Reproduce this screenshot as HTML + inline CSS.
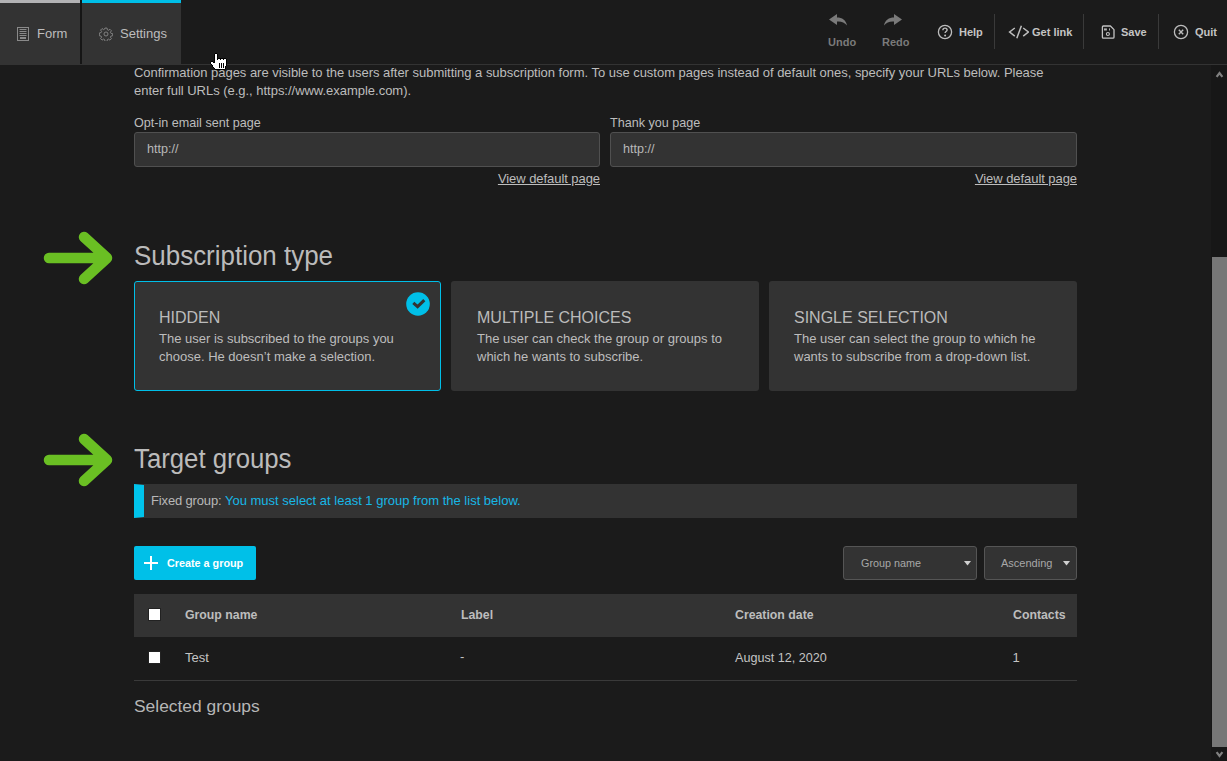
<!DOCTYPE html>
<html><head><meta charset="utf-8">
<style>
*{box-sizing:border-box;margin:0;padding:0}
html,body{width:1227px;height:761px;overflow:hidden;background:#1b1b1b;font-family:"Liberation Sans",sans-serif;color:#bdbdbd}
.a{position:absolute;white-space:nowrap}
.t{position:absolute;white-space:nowrap;line-height:1}
#hdr{position:absolute;left:0;top:0;width:1227px;height:65px;background:#1b1b1b;border-bottom:1px solid #333}
.tab{position:absolute;top:0;height:64px;background:#333}
.hb{position:absolute;font-size:11px;font-weight:bold;color:#c4c4c4;line-height:1}
.sep{position:absolute;top:14px;width:1px;height:35px;background:#3a3a3a}
.inp{position:absolute;top:132px;height:35px;background:#333;border:1px solid #505050;border-radius:3px}
.card{position:absolute;top:281px;height:110px;background:#333;border-radius:3px}
.ct{position:absolute;font-size:16px;color:#bbbbbb;line-height:1}
.cd{position:absolute;font-size:13px;color:#bdbdbd;line-height:18px;white-space:nowrap}
.th{position:absolute;font-size:12.3px;font-weight:bold;color:#bdbdbd;line-height:1}
.td{position:absolute;font-size:13px;color:#c4c4c4;line-height:1}
.cb{position:absolute;width:12px;height:12px;background:#fff;border:1px solid #222}
</style></head><body>

<div id="hdr"></div>
<div class="tab" style="left:0;width:80px"></div>
<div class="a" style="left:0;top:0;width:80px;height:3px;background:#b3b3b5"></div>
<div class="a" style="left:80px;top:0;width:2px;height:64px;background:#151515"></div>
<div class="tab" style="left:82px;width:99px"></div>
<div class="a" style="left:82px;top:0;width:99px;height:3px;background:#00bfe8"></div>

<!-- form icon -->
<svg class="a" style="left:17px;top:27px" width="12" height="14" viewBox="0 0 12 14">
<rect x="0.5" y="0.5" width="11" height="13" fill="none" stroke="#8a8a8a" stroke-width="1"/>
<path d="M2.5 2.5H9.5M2.5 4.5H9.5M2.5 6.5H9.5M2.5 8.5H9.5" stroke="#8a8a8a" stroke-width="1"/>
<rect x="3" y="10" width="6" height="2" fill="#8a8a8a"/>
</svg>
<div class="t" style="left:37px;top:27px;font-size:13px;color:#bdbdbd">Form</div>

<!-- gear icon -->
<svg class="a" style="left:99px;top:27px" width="14" height="14" viewBox="0 0 16 16">
<path d="M6.8 1.2h2.4l.4 2 1.2.6 1.7-1.2 1.7 1.7-1.2 1.7.6 1.2 2 .4v2.4l-2 .4-.6 1.2 1.2 1.7-1.7 1.7-1.7-1.2-1.2.6-.4 2H6.8l-.4-2-1.2-.6-1.7 1.2-1.7-1.7 1.2-1.7-.6-1.2-2-.4V6.8l2-.4.6-1.2-1.2-1.7 1.7-1.7 1.7 1.2 1.2-.6z" fill="none" stroke="#8a8a8a" stroke-width="1"/>
<circle cx="8" cy="8" r="2.3" fill="none" stroke="#8a8a8a" stroke-width="1"/>
</svg>
<div class="t" style="left:120px;top:27px;font-size:13px;color:#bdbdbd">Settings</div>

<!-- cursor -->
<svg class="a" style="left:210px;top:53px" width="17" height="17" viewBox="0 0 17 17" shape-rendering="crispEdges"><path d="M5 0h1v1h-1zM6 0h1v1h-1zM4 1h1v1h-1zM7 1h1v1h-1zM4 2h1v1h-1zM7 2h1v1h-1zM4 3h1v1h-1zM7 3h1v1h-1zM4 4h1v1h-1zM7 4h1v1h-1zM4 5h1v1h-1zM7 5h1v1h-1zM8 5h1v1h-1zM9 5h1v1h-1zM10 5h1v1h-1zM11 5h1v1h-1zM12 5h1v1h-1zM13 5h1v1h-1zM14 5h1v1h-1zM15 5h1v1h-1zM4 6h1v1h-1zM7 6h1v1h-1zM10 6h1v1h-1zM13 6h1v1h-1zM16 6h1v1h-1zM4 7h1v1h-1zM16 7h1v1h-1zM1 8h1v1h-1zM2 8h1v1h-1zM4 8h1v1h-1zM16 8h1v1h-1zM0 9h1v1h-1zM3 9h1v1h-1zM4 9h1v1h-1zM16 9h1v1h-1zM0 10h1v1h-1zM9 10h1v1h-1zM11 10h1v1h-1zM13 10h1v1h-1zM16 10h1v1h-1zM1 11h1v1h-1zM9 11h1v1h-1zM11 11h1v1h-1zM13 11h1v1h-1zM16 11h1v1h-1zM2 12h1v1h-1zM9 12h1v1h-1zM11 12h1v1h-1zM13 12h1v1h-1zM16 12h1v1h-1zM2 13h1v1h-1zM9 13h1v1h-1zM11 13h1v1h-1zM13 13h1v1h-1zM15 13h1v1h-1zM3 14h1v1h-1zM9 14h1v1h-1zM11 14h1v1h-1zM13 14h1v1h-1zM15 14h1v1h-1zM4 15h1v1h-1zM15 15h1v1h-1zM5 16h1v1h-1zM6 16h1v1h-1zM7 16h1v1h-1zM8 16h1v1h-1zM9 16h1v1h-1zM10 16h1v1h-1zM11 16h1v1h-1zM12 16h1v1h-1zM13 16h1v1h-1zM14 16h1v1h-1z" fill="#000"/><path d="M5 1h1v1h-1zM6 1h1v1h-1zM5 2h1v1h-1zM6 2h1v1h-1zM5 3h1v1h-1zM6 3h1v1h-1zM5 4h1v1h-1zM6 4h1v1h-1zM5 5h1v1h-1zM6 5h1v1h-1zM5 6h1v1h-1zM6 6h1v1h-1zM8 6h1v1h-1zM9 6h1v1h-1zM11 6h1v1h-1zM12 6h1v1h-1zM14 6h1v1h-1zM15 6h1v1h-1zM5 7h1v1h-1zM6 7h1v1h-1zM7 7h1v1h-1zM8 7h1v1h-1zM9 7h1v1h-1zM10 7h1v1h-1zM11 7h1v1h-1zM12 7h1v1h-1zM13 7h1v1h-1zM14 7h1v1h-1zM15 7h1v1h-1zM5 8h1v1h-1zM6 8h1v1h-1zM7 8h1v1h-1zM8 8h1v1h-1zM9 8h1v1h-1zM10 8h1v1h-1zM11 8h1v1h-1zM12 8h1v1h-1zM13 8h1v1h-1zM14 8h1v1h-1zM15 8h1v1h-1zM1 9h1v1h-1zM2 9h1v1h-1zM5 9h1v1h-1zM6 9h1v1h-1zM7 9h1v1h-1zM8 9h1v1h-1zM9 9h1v1h-1zM10 9h1v1h-1zM11 9h1v1h-1zM12 9h1v1h-1zM13 9h1v1h-1zM14 9h1v1h-1zM15 9h1v1h-1zM1 10h1v1h-1zM2 10h1v1h-1zM3 10h1v1h-1zM4 10h1v1h-1zM5 10h1v1h-1zM6 10h1v1h-1zM7 10h1v1h-1zM8 10h1v1h-1zM10 10h1v1h-1zM12 10h1v1h-1zM14 10h1v1h-1zM15 10h1v1h-1zM2 11h1v1h-1zM3 11h1v1h-1zM4 11h1v1h-1zM5 11h1v1h-1zM6 11h1v1h-1zM7 11h1v1h-1zM8 11h1v1h-1zM10 11h1v1h-1zM12 11h1v1h-1zM14 11h1v1h-1zM15 11h1v1h-1zM3 12h1v1h-1zM4 12h1v1h-1zM5 12h1v1h-1zM6 12h1v1h-1zM7 12h1v1h-1zM8 12h1v1h-1zM10 12h1v1h-1zM12 12h1v1h-1zM14 12h1v1h-1zM15 12h1v1h-1zM3 13h1v1h-1zM4 13h1v1h-1zM5 13h1v1h-1zM6 13h1v1h-1zM7 13h1v1h-1zM8 13h1v1h-1zM10 13h1v1h-1zM12 13h1v1h-1zM14 13h1v1h-1zM4 14h1v1h-1zM5 14h1v1h-1zM6 14h1v1h-1zM7 14h1v1h-1zM8 14h1v1h-1zM10 14h1v1h-1zM12 14h1v1h-1zM14 14h1v1h-1zM5 15h1v1h-1zM6 15h1v1h-1zM7 15h1v1h-1zM8 15h1v1h-1zM9 15h1v1h-1zM10 15h1v1h-1zM11 15h1v1h-1zM12 15h1v1h-1zM13 15h1v1h-1zM14 15h1v1h-1z" fill="#fff"/></svg>

<!-- right header -->
<svg class="a" style="left:829px;top:14px" width="19" height="12" viewBox="0 0 19 12">
<path d="M8 0 L0 5.5 L8 11 V7.5 C12 7 15.5 8.5 18 11.5 C17 6 13 3.5 8 3.5 Z" fill="#7a7a7a"/>
</svg>
<div class="hb" style="left:828px;top:37px;color:#7a7a7a">Undo</div>
<svg class="a" style="left:883px;top:14px" width="19" height="12" viewBox="0 0 19 12">
<path d="M11 0 L19 5.5 L11 11 V7.5 C7 7 3.5 8.5 1 11.5 C2 6 6 3.5 11 3.5 Z" fill="#7a7a7a"/>
</svg>
<div class="hb" style="left:882px;top:37px;color:#7a7a7a">Redo</div>

<svg class="a" style="left:937px;top:24px" width="16" height="16" viewBox="0 0 16 16">
<circle cx="8" cy="8" r="6.6" fill="none" stroke="#bdbdbd" stroke-width="1.3"/>
<path d="M5.9 6.2c0-1.3 1-2.1 2.1-2.1s2.1.8 2.1 1.9c0 1.4-2 1.6-2 3" fill="none" stroke="#bdbdbd" stroke-width="1.4"/>
<circle cx="8.1" cy="11.6" r="1" fill="#bdbdbd"/>
</svg>
<div class="hb" style="left:959px;top:27px">Help</div>
<div class="sep" style="left:994px"></div>

<svg class="a" style="left:1008px;top:25px" width="21" height="14" viewBox="0 0 21 14">
<path d="M6.8 3L1.6 7L6.8 11.2M15.2 3L20.4 7L15.2 11.2M13.4 0.8L8.8 13.2" fill="none" stroke="#bdbdbd" stroke-width="1.5"/>
</svg>
<div class="hb" style="left:1032px;top:27px">Get link</div>
<div class="sep" style="left:1083px"></div>

<svg class="a" style="left:1101px;top:25px" width="15" height="15" viewBox="0 0 15 15">
<path d="M2.4 1H9.4L13 4.6V12.2Q13 13.2 12 13.2H2.4Q1.4 13.2 1.4 12.2V2Q1.4 1 2.4 1Z" fill="none" stroke="#c4c4c4" stroke-width="1.3" stroke-linejoin="round"/>
<rect x="3" y="3.4" width="2.9" height="2.1" fill="#b0b0b0"/>
<rect x="8" y="3.4" width="1" height="2.1" fill="#b0b0b0"/>
<circle cx="6.9" cy="9" r="1.5" fill="none" stroke="#c4c4c4" stroke-width="1.1"/>
</svg>
<div class="hb" style="left:1121px;top:27px">Save</div>
<div class="sep" style="left:1158px"></div>

<svg class="a" style="left:1173px;top:24px" width="16" height="16" viewBox="0 0 16 16">
<circle cx="8" cy="8" r="6.6" fill="none" stroke="#bdbdbd" stroke-width="1.3"/>
<path d="M5.8 5.8L10.2 10.2M10.2 5.8L5.8 10.2" stroke="#bdbdbd" stroke-width="1.4"/>
</svg>
<div class="hb" style="left:1195px;top:27px">Quit</div>

<!-- content -->
<div class="a" style="left:134px;top:64px;font-size:13px;line-height:18px;letter-spacing:-0.023px;color:#bdbdbd">Confirmation pages are visible to the users after submitting a subscription form. To use custom pages instead of default ones, specify your URLs below. Please<br>enter full URLs (e.g., https://www.example.com).</div>

<div class="t" style="left:134px;top:117px;font-size:12.6px;color:#bdbdbd">Opt-in email sent page</div>
<div class="t" style="left:610px;top:117px;font-size:12.6px;color:#bdbdbd">Thank you page</div>
<div class="inp" style="left:134px;width:466px"></div>
<div class="inp" style="left:610px;width:467px"></div>
<div class="t" style="left:147px;top:143px;font-size:12.6px;color:#b8b8b8">http://</div>
<div class="t" style="left:623px;top:143px;font-size:12.6px;color:#b8b8b8">http://</div>
<div class="t" style="right:627px;top:172px;font-size:13px;letter-spacing:-0.06px;color:#bdbdbd;text-decoration:underline">View default page</div>
<div class="t" style="right:150px;top:172px;font-size:13px;letter-spacing:-0.06px;color:#bdbdbd;text-decoration:underline">View default page</div>

<!-- arrow 1 -->
<svg class="a" style="left:0;top:200px" width="130" height="120" viewBox="0 200 130 120">
<path d="M49 258H107M84 237L107 258L84 279" fill="none" stroke="#6abf23" stroke-width="10.5" stroke-linecap="round" stroke-linejoin="round"/>
</svg>
<div class="t" style="left:134px;top:243px;font-size:27px;color:#bbbbbb;transform:scaleX(0.961);transform-origin:0 0">Subscription type</div>

<div class="card" style="left:134px;width:307px;border:1px solid #00bfe8"></div>
<div class="card" style="left:451px;width:308px"></div>
<div class="card" style="left:769px;width:308px"></div>
<svg class="a" style="left:406px;top:292px" width="24" height="24" viewBox="0 0 24 24">
<circle cx="12" cy="12" r="11.8" fill="#00bfe8"/>
<path d="M7.3 10.8L11.6 14.6L18.3 8.2" fill="none" stroke="#333" stroke-width="3.1"/>
</svg>
<div class="ct" style="left:159px;top:310px">HIDDEN</div>
<div class="cd" style="left:159px;top:330px">The user is subscribed to the groups you<br>choose. He doesn’t make a selection.</div>
<div class="ct" style="left:477px;top:310px">MULTIPLE CHOICES</div>
<div class="cd" style="left:477px;top:330px">The user can check the group or groups to<br>which he wants to subscribe.</div>
<div class="ct" style="left:794px;top:310px">SINGLE SELECTION</div>
<div class="cd" style="left:794px;top:330px">The user can select the group to which he<br>wants to subscribe from a drop-down list.</div>

<!-- arrow 2 -->
<svg class="a" style="left:0;top:402px" width="130" height="120" viewBox="0 200 130 120">
<path d="M49 258H107M84 237L107 258L84 279" fill="none" stroke="#6abf23" stroke-width="10.5" stroke-linecap="round" stroke-linejoin="round"/>
</svg>
<div class="t" style="left:134px;top:446px;font-size:27px;color:#bbbbbb;transform:scaleX(0.954);transform-origin:0 0">Target groups</div>

<div class="a" style="left:134px;top:484px;width:943px;height:34px;background:#333;border-left:10px solid #00c4ec;border-top:1px solid #333;border-bottom:1px solid #333"></div>
<div class="t" style="left:151px;top:494px;font-size:13px;color:#b8b8b8"><span style="letter-spacing:-0.15px">Fixed group: </span><span style="color:#17b7e6">You must select at least 1 group from the list below.</span></div>

<div class="a" style="left:134px;top:546px;width:122px;height:34px;background:#00c0e8;border-radius:2px"></div>
<svg class="a" style="left:144px;top:556px" width="14" height="14" viewBox="0 0 14 14">
<path d="M7 0V14M0 7H14" stroke="#fff" stroke-width="2"/>
</svg>
<div class="t" style="left:167px;top:558px;font-size:10.8px;font-weight:bold;color:#fff">Create a group</div>

<div class="a" style="left:843px;top:546px;width:134px;height:34px;background:#333;border:1px solid #555;border-radius:3px"></div>
<div class="t" style="left:861px;top:558px;font-size:10.8px;color:#a8a8a8">Group name</div>
<svg class="a" style="left:964px;top:561px" width="7" height="5" viewBox="0 0 7 5"><path d="M0 0H7L3.5 4.5z" fill="#d0d0d0"/></svg>
<div class="a" style="left:984px;top:546px;width:93px;height:34px;background:#333;border:1px solid #555;border-radius:3px"></div>
<div class="t" style="left:1001px;top:558px;font-size:11px;color:#a8a8a8">Ascending</div>
<svg class="a" style="left:1063px;top:561px" width="7" height="5" viewBox="0 0 7 5"><path d="M0 0H7L3.5 4.5z" fill="#d0d0d0"/></svg>

<!-- table -->
<div class="a" style="left:134px;top:594px;width:943px;height:43px;background:#333"></div>
<div class="cb" style="left:148px;top:608px;width:13px;height:13px"></div>
<div class="th" style="left:185px;top:609px">Group name</div>
<div class="th" style="left:461px;top:609px">Label</div>
<div class="th" style="left:735px;top:609px">Creation date</div>
<div class="th" style="left:1013px;top:609px">Contacts</div>

<div class="cb" style="left:148px;top:651px;width:13px;height:13px"></div>
<div class="td" style="left:185px;top:651px">Test</div>
<div class="td" style="left:460px;top:650px">-</div>
<div class="td" style="left:735px;top:652px;font-size:12.6px">August 12, 2020</div>
<div class="td" style="left:1012.5px;top:651px">1</div>
<div class="a" style="left:134px;top:680px;width:943px;height:1px;background:#3a3a3a"></div>

<div class="t" style="left:134px;top:698px;font-size:17.4px;color:#b6b6b6">Selected groups</div>

<!-- scrollbar -->
<div class="a" style="left:1211px;top:65px;width:16px;height:696px;background:#171717"></div>
<svg class="a" style="left:1215px;top:70px" width="9" height="8" viewBox="0 0 9 8"><path d="M1.6 6.8L4.5 3L7.4 6.8" fill="none" stroke="#808080" stroke-width="2.2"/></svg>
<div class="a" style="left:1212px;top:257px;width:15px;height:490px;background:#777"></div>
<svg class="a" style="left:1215px;top:751px" width="9" height="8" viewBox="0 0 9 8"><path d="M1.6 1.2L4.5 5L7.4 1.2" fill="none" stroke="#808080" stroke-width="2.2"/></svg>

</body></html>
